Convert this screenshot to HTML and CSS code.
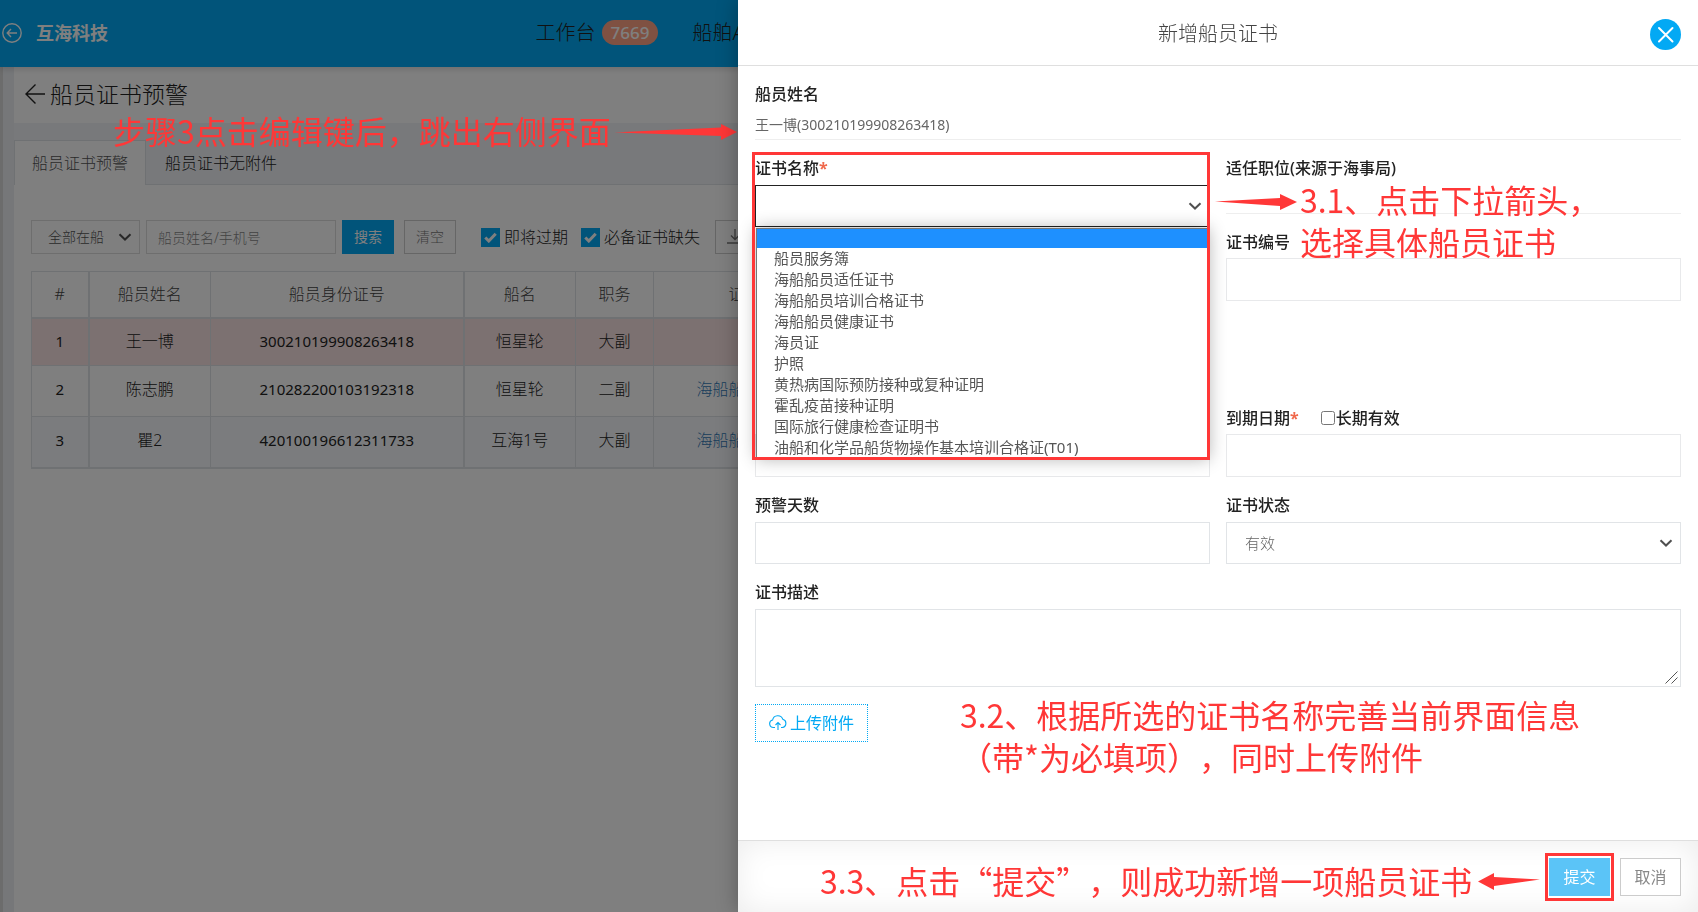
FILE: index.html
```html
<!DOCTYPE html>
<html lang="zh-CN">
<head>
<meta charset="utf-8">
<title>船员证书预警</title>
<link rel="stylesheet" href="styles.css">
</head>
<body>
<div class="page">
  <header class="topbar">
    <a class="back-circle" href="#" aria-label="返回">
      <svg width="20" height="20" viewBox="0 0 20 20" fill="none" stroke="currentColor" stroke-width="1.4"><circle cx="10" cy="10" r="9.2"/><path d="M15 10H5.5M9 6l-3.8 4L9 14"/></svg>
    </a>
    <a class="brand" href="#">互海科技</a>
    <nav class="nav">
      <a class="nav-item" href="#">工作台<span class="badge">7669</span></a>
      <a class="nav-item" href="#">船舶A</a>
    </nav>
  </header>
  <div class="shell">
    <div class="rail"></div>
    <main class="main">
      <div class="titlebar">
        <a class="title-back" href="#" aria-label="返回"><svg width="20" height="20" viewBox="0 0 20 20" fill="none" stroke="currentColor" stroke-width="1.4"><path d="M20 10H1M10.5 .5L1 10l9.500 9.500"/></svg></a>
        <h1 class="title">船员证书预警</h1>
      </div>
      <div class="tabs">
        <a class="tab tab-active" href="#">船员证书预警</a>
        <a class="tab" href="#">船员证书无附件</a>
      </div>
      <section class="panel">
        <form class="filters">
          <span class="select-wrap filter-select">
            <select class="filter-control" aria-label="在船状态"><option>全部在船</option></select>
            <svg class="chevron" width="14" height="8" viewBox="0 0 14 8"><path d="M1.500 1.200L7 6.500l5.500-5.300"/></svg>
          </span>
          <input class="filter-control filter-input" type="text" aria-label="船员姓名/手机号" placeholder="船员姓名/手机号">
          <button class="btn btn-search" type="button">搜索</button>
          <button class="btn btn-clear" type="button">清空</button>
          <label class="check check-first"><span class="check-box"><input class="check-input" type="checkbox" checked><svg class="check-mark" width="13" height="11" viewBox="0 0 13 11"><path d="M1.300 5.500l3.500 3.500L11.700 1.800"/></svg></span>即将过期</label>
          <label class="check"><span class="check-box"><input class="check-input" type="checkbox" checked><svg class="check-mark" width="13" height="11" viewBox="0 0 13 11"><path d="M1.300 5.500l3.500 3.500L11.700 1.800"/></svg></span>必备证书缺失</label>
          <button class="btn btn-export" type="button" aria-label="导出"><svg width="20" height="16" viewBox="0 0 20 16" fill="none" stroke="currentColor" stroke-width="1.300"><path d="M10 0v10M6 6.500l4 4 4-4M2 14h16"/></svg></button>
        </form>
        <table class="crew">
          <colgroup><col class="c-no"><col class="c-name"><col class="c-id"><col class="c-ship"><col class="c-job"><col class="c-cert"><col></colgroup>
          <thead><tr><th class="thick">#</th><th>船员姓名</th><th class="thick">船员身份证号</th><th>船名</th><th>职务</th><th>证书名称</th><th></th></tr></thead>
          <tbody>
            <tr class="row-alert"><td class="num thick">1</td><td>王一博</td><td class="num thick">300210199908263418</td><td>恒星轮</td><td>大副</td><td></td><td></td></tr>
            <tr class="row-tall"><td class="num thick">2</td><td>陈志鹏</td><td class="num thick">210282200103192318</td><td>恒星轮</td><td>二副</td><td><a class="link" href="#">海船船员适任证书</a></td><td></td></tr>
            <tr class="row-tall row-even"><td class="num thick">3</td><td>瞿2</td><td class="num thick">420100196612311733</td><td>互海1号</td><td>大副</td><td><a class="link" href="#">海船船员适任证书</a></td><td></td></tr>
          </tbody>
        </table>
      </section>
    </main>
  </div>
</div>
<div class="backdrop"></div>

<p class="note note-step">步骤3点击编辑键后，跳出右侧界面</p>
<svg class="arrow arrow-step" width="123" height="16" viewBox="0 0 123 16"><path d="M0 8.500L107 3.500V0l16 8-16 8v-4z"/></svg>

<aside class="drawer" role="dialog" aria-labelledby="drawer-title">
  <header class="drawer-head">
    <h2 class="drawer-title" id="drawer-title">新增船员证书</h2>
    <button class="close" type="button" aria-label="关闭"><svg width="31" height="31" viewBox="0 0 31 31" fill="none" stroke="#fff" stroke-width="2"><path d="M9 9l13.500 13.500M22.500 9L9 22.500" stroke-linecap="round"/></svg></button>
  </header>
  <form class="drawer-body">
    <div class="crew-name">
      <div class="label">船员姓名</div>
      <div class="crew-value">王一博(300210199908263418)</div>
    </div>
    <div class="grid grid-top">
      <div class="field field-open">
        <label class="label" for="cert">证书名称<span class="req">*</span></label>
        <span class="select-wrap">
          <select class="control control-open" id="cert"><option></option></select>
          <svg class="chevron" width="14" height="8" viewBox="0 0 14 8"><path d="M1.500 1.200L7 6.500l5.500-5.300"/></svg>
        </span>
        <ul class="options" role="listbox" aria-label="证书名称">
          <li class="option option-active" role="option" aria-selected="true"></li>
          <li class="option" role="option">船员服务簿</li>
          <li class="option" role="option">海船船员适任证书</li>
          <li class="option" role="option">海船船员培训合格证书</li>
          <li class="option" role="option">海船船员健康证书</li>
          <li class="option" role="option">海员证</li>
          <li class="option" role="option">护照</li>
          <li class="option" role="option">黄热病国际预防接种或复种证明</li>
          <li class="option" role="option">霍乱疫苗接种证明</li>
          <li class="option" role="option">国际旅行健康检查证明书</li>
          <li class="option" role="option">油船和化学品船货物操作基本培训合格证(T01)</li>
        </ul>
        <div class="frame frame-select"></div>
      </div>
      <div class="stack">
        <div class="field field-line">
          <div class="label">适任职位(来源于海事局)</div>
        </div>
        <div class="field">
          <label class="label" for="cert-no">证书编号</label>
          <input class="control control-date" id="cert-no" type="text">
        </div>
      </div>
    </div>
    <div class="grid">
      <div class="field field-end"><input class="control control-date" type="text" aria-label="签发日期"></div>
      <div class="field">
        <div class="label-row">
          <label class="label" for="expire">到期日期<span class="req">*</span></label>
          <label class="label label-check"><input class="tick" type="checkbox">长期有效</label>
        </div>
        <input class="control control-date" id="expire" type="text">
      </div>
      <div class="field">
        <label class="label" for="days">预警天数</label>
        <input class="control" id="days" type="text">
      </div>
      <div class="field">
        <label class="label" for="state">证书状态</label>
        <span class="select-wrap">
          <select class="control" id="state"><option>有效</option></select>
          <svg class="chevron" width="14" height="8" viewBox="0 0 14 8"><path d="M1.500 1.200L7 6.500l5.500-5.300"/></svg>
        </span>
      </div>
      <div class="field field-wide">
        <label class="label" for="desc">证书描述</label>
        <textarea class="control control-area" id="desc"></textarea>
        <svg class="grip" width="13" height="13" viewBox="0 0 13 13"><path d="M.5 12.500l12-12M6.500 12.500l6-6"/></svg>
      </div>
    </div>
    <button class="upload" type="button"><svg width="18" height="16" viewBox="0 0 18 16" fill="none" stroke="currentColor" stroke-width="1.100"><path d="M6 12.500H4.500A3.800 3.800 0 0 1 3.600 5 5.300 5.300 0 0 1 13.800 4.300 4.200 4.200 0 0 1 13.300 12.500H12M9 15V7.500M6.500 10L9 7.500l2.500 2.500"/></svg>上传附件</button>
  </form>
  <footer class="drawer-foot">
    <span class="submit-wrap"><button class="action action-submit" type="button">提交</button></span>
    <button class="action action-cancel" type="button">取消</button>
  </footer>

  <svg class="arrow arrow-select" width="82" height="16" viewBox="0 0 82 16"><path d="M0 7.500L65 4V0l17 8-17 8v-4z"/></svg>
  <p class="note note-select">3.1、点击下拉箭头，<br>选择具体船员证书</p>
  <p class="note note-form">3.2、根据所选的证书名称完善当前界面信息<br>（带*为必填项），同时上传附件</p>
  <p class="note note-submit">3.3、点击“提交”，则成功新增一项船员证书</p>
  <svg class="arrow arrow-submit" width="62" height="17" viewBox="0 0 62 17"><path d="M62 6.500L16 4V0L0 8.500 16 17v-4z"/></svg>
</aside>
</body>
</html>
```

FILE: styles.css
```css
* { box-sizing: border-box; }
html, body { height: 100%; }
body {
  margin: 0;
  overflow: hidden;
  background: #fff;
  color: #222;
  font: 300 16px/24px "Noto Sans", "Noto Sans CJK SC", sans-serif;
}
a { color: inherit; text-decoration: none; }
button, input, select, textarea { font: inherit; color: inherit; border-radius: 0; margin: 0; }
h1, h2, p, ul { margin: 0; padding: 0; font-weight: inherit; list-style: none; }
svg { display: block; flex: none; }

/* page behind the drawer */
.page { display: flex; flex-direction: column; height: 100vh; overflow: hidden; }
.topbar {
  display: flex;
  align-items: center;
  flex: none;
  height: 67px;
  padding: 0 2px 2px;
  background: #03a9f4;
  box-shadow: 0 2px 6px rgba(0, 0, 0, .15);
  z-index: 1;
}
.back-circle { color: #fff; }
.brand { margin-left: 14px; color: #fff; font-size: 18px; font-weight: 700; }
.nav { display: flex; gap: 34px; margin-left: calc(25% + 4px); font-size: 20px; white-space: nowrap; }
.nav-item { display: flex; align-items: center; gap: 6px; }
.badge {
  padding: 0 9px;
  border-radius: 13px;
  background: #ffa284;
  color: #fff;
  font-size: 17px;
  font-weight: 500;
  line-height: 25px;
}
.shell { display: flex; flex: 1; min-height: 0; }
.rail { flex: none; width: 14px; border-left: 3px solid #d8d8d8; background: #eceff3; }
.main { display: flex; flex-direction: column; flex: 1; min-width: 0; background: #f0f2f6; }
.titlebar { display: flex; align-items: center; gap: 5px; height: 56px; padding: 0 11px 3px; background: #fff; }
.title { font-size: 23px; line-height: 32px; }
.tabs { display: flex; height: 62px; padding-top: 17px; border-bottom: 1px solid #dfe2e6; }
.tab { padding: 11px 19px 0; }
.tab-active {
  height: 45px;
  padding: 10px 17px 0;
  border: 1px solid #dfe2e6;
  border-bottom: 0;
  background: #fff;
  color: #555;
}
.panel { flex: 1; padding: 35px 17px; background: #fff; }
.filters { display: flex; align-items: center; height: 34px; font-size: 14px; }
.filter-control { height: 34px; border: 1px solid #ddd; background: #fff; color: #555; }
.filter-select { width: 109px; }
.filter-select .filter-control { padding-left: 16px; }
.filter-input { width: 190px; margin: 0 6px; padding: 0 11px; }
.filter-input::placeholder { color: #888; opacity: 1; }
.btn { width: 52px; height: 34px; padding: 0; border: 1px solid #ccc; background: #fff; color: #777; }
.btn-search { border-color: #03a9f4; background: #03a9f4; color: #fff; font-weight: 400; }
.btn-clear { margin-left: 10px; }
.btn-export { display: flex; align-items: center; justify-content: flex-start; margin-left: 15px; padding-left: 9px; }
.check { display: flex; align-items: center; gap: 4px; margin-left: 13px; font-size: 16px; }
.check-first { margin-left: 25px; }
.check-box { display: grid; place-items: center; }
.check-input { grid-area: 1 / 1; width: 19px; height: 19px; appearance: none; background: #03a9f4; }
.check-mark { grid-area: 1 / 1; fill: none; stroke: #fff; stroke-width: 3; }

.select-wrap { position: relative; display: block; }
.select-wrap select { width: 100%; appearance: none; }
.chevron {
  position: absolute;
  top: 50%;
  right: 8px;
  margin-top: -4px;
  fill: none;
  stroke: #505050;
  stroke-width: 2;
  pointer-events: none;
}

.crew { width: 100%; margin-top: 17px; table-layout: fixed; border-collapse: collapse; text-align: center; }
.crew th, .crew td { height: 48px; padding: 0 0 2px; border: 1px solid #dfe2e6; font-weight: 300; }
.crew th { height: 46px; padding: 0; border-bottom-width: 2px; color: #444; }
.crew .thick { border-right-width: 2px; }
.crew .num { font-size: 15px; font-weight: 400; }
.crew .row-tall td { height: 51px; padding-bottom: 4px; }
.row-alert { background: #f8e2e2; }
.row-even { background: #f6f9fc; }
.crew tr:last-child td { border-bottom-width: 2px; }
.link { color: #337ab7; }
.c-no { width: 57px; }
.c-name { width: 122px; }
.c-id { width: 253px; }
.c-ship { width: 112px; }
.c-job { width: 78px; }
.c-cert { width: 214px; }

.backdrop { position: fixed; inset: 0; background: rgba(0, 0, 0, .5); z-index: 2; }

/* drawer */
.drawer {
  position: fixed;
  top: 0;
  right: 0;
  bottom: 0;
  display: flex;
  flex-direction: column;
  width: 56.54%;
  background: #fff;
  box-shadow: 0 0 20px rgba(0, 0, 0, .3);
  z-index: 3;
}
.drawer-head {
  display: flex;
  align-items: center;
  flex: none;
  height: 66px;
  padding: 0 17px 0 48px;
  border-bottom: 1px solid #dfdfdf;
}
.drawer-title { flex: 1; padding-top: 2px; text-align: center; font-size: 20px; color: #444; }
.close { width: 31px; height: 31px; padding: 0; border: 0; border-radius: 50%; background: #03a9f4; margin-top: 4px; }
.drawer-body { flex: 1; min-height: 0; padding: 16px 17px 0; }
.crew-name { height: 58px; border-bottom: 1px solid #eee; margin-bottom: 16px; }
.label { display: block; font-weight: 500; line-height: 24px; color: #222; }
.crew-value { margin-top: 7px; font-size: 14px; font-weight: 400; line-height: 24px; color: #666; }
.req { color: #f0694c; font-weight: 700; }
.grid { display: grid; grid-template-columns: 1fr 1fr; gap: 16px; }
.grid-top { min-height: 250px; align-items: start; }
.stack { display: flex; flex-direction: column; gap: 16px; }
.field { position: relative; }
.field-line { height: 58px; border-bottom: 1px solid #eee; }
.field-end { align-self: end; }
.field-wide { grid-column: 1 / -1; }
.label-row { display: flex; gap: 22px; }
.label-check { display: flex; align-items: center; gap: 1px; }
.tick { width: 14px; height: 14px; }
.control {
  display: block;
  width: 100%;
  height: 42px;
  margin-top: 5px;
  padding: 0 18px;
  border: 1px solid #e1e4e7;
  background: #fff;
  font-size: 15px;
  color: #666;
}
.control-date { height: 43px; margin-top: 4px; border-color: #e8e9eb; }
.control-open { border-color: #222; outline: 0; }
.control-area { height: 78px; resize: none; }
.grip { position: absolute; right: 3px; bottom: 3px; fill: none; stroke: #555; stroke-width: 1; }
.options {
  position: absolute;
  top: 72px;
  left: 1px;
  right: 1px;
  border: 1px solid #777;
  background: #fff;
  box-shadow: 0 0 16px rgba(0, 0, 0, .3);
  z-index: 1;
}
.option { height: 21px; padding-left: 17px; font-size: 15px; font-weight: 400; line-height: 21px; color: #555; white-space: nowrap; }
.option-active { height: 19px; background: #1e90ff; }
.upload {
  display: flex;
  align-items: center;
  gap: 3px;
  height: 38px;
  margin-top: 17px;
  padding: 0 13px;
  border: 1px dotted #03a9f4;
  background: #fff;
  color: #03a9f4;
  font-weight: 400;
}
.drawer-foot {
  display: flex;
  align-items: center;
  justify-content: flex-end;
  gap: 6px;
  flex: none;
  height: 72px;
  padding: 0 17px;
  border-top: 1px solid #dfdfdf;
  box-shadow: inset 0 0 30px rgba(0, 0, 0, .08);
}
.submit-wrap { padding: 2px 1px; border: 3px solid #ff3737; background: #fff; }
.action { display: block; width: 61px; height: 38px; padding: 0; border: 1px solid #ccc; background: #fff; color: #888; font-weight: 400; }
.action-submit { border-color: #5bc4f7; background: #5bc4f7; color: #fff; }

/* instructions drawn over the screen */
.note {
  position: absolute;
  color: #ff3737;
  font: 400 32px/42px "Noto Sans CJK SC", sans-serif;
  text-spacing-trim: space-all;
  white-space: nowrap;
  z-index: 3;
}
.arrow { position: absolute; fill: #ff3737; z-index: 3; }
.frame { position: absolute; border: 3px solid #ff3737; z-index: 2; }
.frame-select { top: -4px; left: -3px; right: 0; height: 308px; }
.note-step { top: 109px; left: 113px; }
.arrow-step { top: 124px; left: 614px; }
.arrow-select { top: 194px; left: 477px; }
.note-select { top: 178px; left: 562px; }
.note-form { top: 693px; left: 222px; }
.note-submit { top: 859px; left: 82px; }
.arrow-submit { top: 873px; left: 740px; }
```
